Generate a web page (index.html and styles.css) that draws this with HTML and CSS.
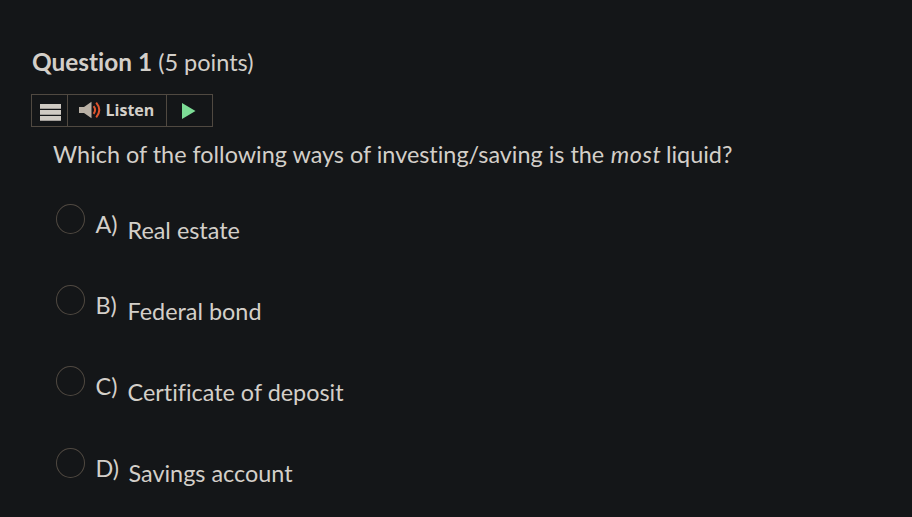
FILE: index.html
```html
<!DOCTYPE html>
<html lang="en">
<head>
<meta charset="utf-8">
<title>Question 1</title>
<link rel="stylesheet" href="styles.css">
</head>
<body>
<main class="quiz">
  <h2 class="title"><strong>Question 1</strong> (5 points)</h2>
  <div class="reader">
    <button class="reader-menu" aria-label="Menu">
      <svg width="21" height="17" viewBox="0 0 21 17" fill="#cfcac3"><path d="M0 0h21v4.800H0zM0 6h21v4.800H0zM0 12h21v4.800H0z"/></svg>
    </button>
    <button class="reader-listen">
      <svg width="22" height="18" viewBox="0 0 22 18"><path d="M0 6h5L12.500 .8v16.400L5 12H0z" fill="#b9b0a5"/><g fill="none" stroke="#e0552f" stroke-width="2"><path d="M14.600 5.200q3 3.800 0 7.600"/><path d="M17.200 1.600q6.200 7.400 0 14.800"/></g></svg>
      <span>Listen</span>
    </button>
    <button class="reader-play" aria-label="Play">
      <svg width="14" height="16" viewBox="0 0 14 16"><path d="M0 0l13.500 8L0 16z" fill="#7ddc96"/></svg>
    </button>
  </div>
  <p class="question">Which of the following ways of investing/saving is the <em>most</em> liquid?</p>
  <div class="options">
    <label class="option"><span class="radio"></span><span class="letter">A)</span><span class="answer">Real estate</span></label>
    <label class="option"><span class="radio"></span><span class="letter">B)</span><span class="answer">Federal bond</span></label>
    <label class="option"><span class="radio"></span><span class="letter">C)</span><span class="answer">Certificate of deposit</span></label>
    <label class="option"><span class="radio"></span><span class="letter">D)</span><span class="answer">Savings account</span></label>
  </div>
</main>
</body>
</html>
```
FILE: styles.css
```css
* { box-sizing: border-box; }
body {
  margin: 0;
  background: #141618;
  color: #d3cfc9;
  font: 23.4px/30px Lato, "Liberation Sans", sans-serif;
  font-variant-ligatures: none;
  overflow: hidden;
}
.quiz { padding: 47px 32px 0; }
.title { margin: 0; font-size: 23.5px; font-weight: 400; white-space: nowrap; }
.title strong { font-weight: 700; font-size: 24.4px; }
.reader {
  display: flex;
  width: 182px;
  height: 33px;
  margin: 17px 0 0 -1px;
  border: 1px solid #504941;
}
.reader button {
  display: flex;
  align-items: center;
  padding: 0;
  border: 0;
  background: none;
  color: #d3cfc9;
}
.reader .reader-menu { width: 36px; padding: 3px 0 0 8px; border-right: 1px solid #504941; }
.reader .reader-listen {
  width: 99px;
  padding: 0 0 1px 11px;
  gap: 4.5px;
  border-right: 1px solid #504941;
  font: 700 16px/20px "Open Sans", sans-serif;
}
.reader .reader-play { padding: 1px 0 0 15px; }
.question { margin: 12px 0 0 21px; white-space: nowrap; }
.question em { margin-left: 0.5px; letter-spacing: 0.6px; margin-right: -1.4px; }
.options { margin: 35px 0 0 24px; }
.option { display: flex; height: 81.2px; }
.radio {
  width: 29px;
  height: 30px;
  border: 1px solid #504941;
  border-radius: 50%;
}
.letter { width: 32px; margin: 5px 0 0 10.5px; }
.answer { margin-top: 10.6px; white-space: nowrap; }
.option:last-child .answer { margin-left: 1px; }
```
